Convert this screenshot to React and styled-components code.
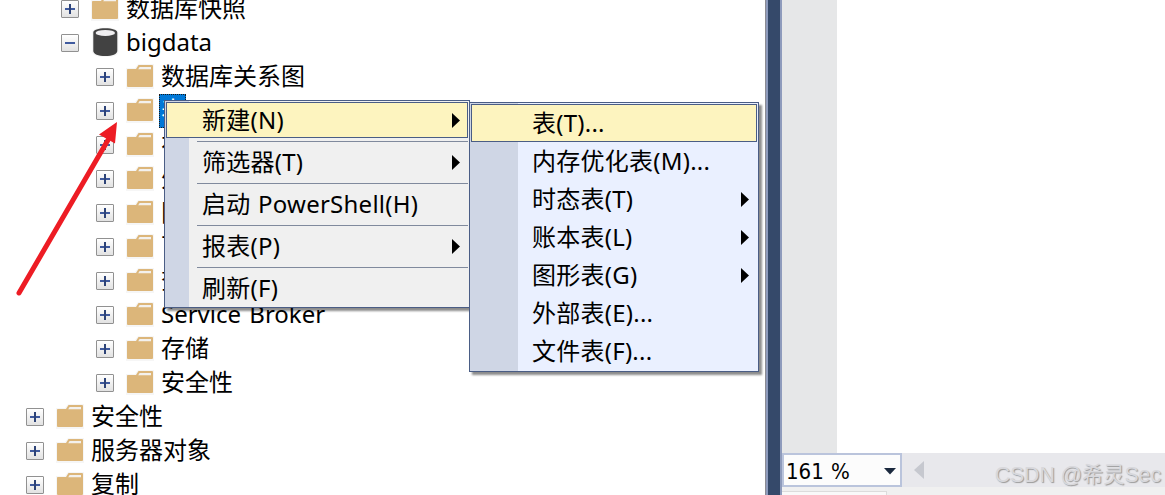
import React from 'react'
import styled, {createGlobalStyle} from 'styled-components';

const tree = [
    {label: '数据库快照', level: 1},
    {label: 'bigdata', level: 1, open: true, database: true},
    {label: '数据库关系图', level: 2},
    {label: '表', level: 2, selected: true},
    {label: '视图', level: 2},
    {label: '外部资源', level: 2},
    {label: '同义词', level: 2},
    {label: '可编程性', level: 2},
    {label: '查询存储', level: 2},
    {label: 'Service Broker', level: 2},
    {label: '存储', level: 2},
    {label: '安全性', level: 2},
    {label: '安全性', level: 0},
    {label: '服务器对象', level: 0},
    {label: '复制', level: 0},
];

const menu = [
    {label: '新建(N)', arrow: true, active: true},
    {label: '筛选器(T)', arrow: true},
    {label: '启动 PowerShell(H)'},
    {label: '报表(P)', arrow: true},
    {label: '刷新(F)'},
];

const submenu = [
    {label: '表(T)...', active: true},
    {label: '内存优化表(M)...'},
    {label: '时态表(T)', arrow: true},
    {label: '账本表(L)', arrow: true},
    {label: '图形表(G)', arrow: true},
    {label: '外部表(E)...'},
    {label: '文件表(F)...'},
];

function Toggle({open}) {
    return (
        <ToggleBox>
            <svg width="10" height="10" viewBox="0 0 10 10" shapeRendering="crispEdges">
                <path d="M0 4h10v2H0z" fill="#3f5a9e"/>
                {!open && <path d="M4 0h2v10H4z" fill="#2d4377"/>}
            </svg>
        </ToggleBox>
    )
}

function Folder() {
    return (
        <svg width="30" height="28" viewBox="0 0 30 28">
            <path d="M1 5h9l3-4h16v25H1z" fill="#f6f6f6"/>
            <path d="M2 6.5Q2 6 3 6h8l2.5-4H27q1 0 1 1v20q0 1-1 1H3q-1 0-1-1z" fill="#dcb67a"/>
            <path d="M14.6 4H26v2.2H13.2z" fill="#f3f1ee"/>
        </svg>
    )
}

function Database() {
    return (
        <svg width="30" height="32" viewBox="0 0 30 32">
            <path d="M2 6Q2 .5 15 .5T28.500 6v19q0 5-13 5T2 25z" fill="#f6f6f6"/>
            <path d="M3.300 5.500c0-2.500 5-4.200 12-4.200s12 1.700 12 4.200v18.500c0 3-5 5-12 5s-12-2-12-5z" fill="#424242"/>
            <ellipse cx="15.300" cy="5.900" rx="9.700" ry="3" fill="#f0eff1"/>
        </svg>
    )
}

function Arrow() {
    return (
        <svg width="8" height="15" viewBox="0 0 8 15">
            <path d="M0 0l8 7.500L0 15z" fill="#000"/>
        </svg>
    )
}

export default function App() {
    return (
        <Page>
            <GlobalStyle/>
            <Explorer>
                {tree.map((node, i) => (
                    <TreeRow key={i} $level={node.level}>
                        <Toggle open={node.open}/>
                        <IconSlot>{node.database ? <Database/> : <Folder/>}</IconSlot>
                        <Label $selected={node.selected}>{node.label}</Label>
                    </TreeRow>
                ))}
            </Explorer>
            <Splitter/>
            <Editor>
                <Code><Gutter/></Code>
                <ScrollRow>
                    <Zoom>
                        <span>161 %</span>
                        <svg width="12" height="7" viewBox="0 0 12 7"><path d="M0 0h12L6 6.500z" fill="#1b293e"/></svg>
                    </Zoom>
                    <svg width="10" height="18" viewBox="0 0 10 18"><path d="M10 0v18L0 9z" fill="#c6c8cf"/></svg>
                    <Watermark>CSDN @希灵Sec</Watermark>
                </ScrollRow>
                <BottomTabs><Tab/></BottomTabs>
            </Editor>
            <ContextMenu>
                {menu.map((item) => (
                    <MenuItem key={item.label} $active={item.active}>
                        <Caption>{item.label}</Caption>
                        {item.arrow && <Arrow/>}
                    </MenuItem>
                ))}
            </ContextMenu>
            <SubMenu>
                {submenu.map((item) => (
                    <SubItem key={item.label} $active={item.active}>
                        <Caption>{item.label}</Caption>
                        {item.arrow && <Arrow/>}
                    </SubItem>
                ))}
            </SubMenu>
            <Pointer width="130" height="310" viewBox="0 0 130 310">
                <path d="M19 293L108 140" stroke="#ed1c24" strokeWidth="5" strokeLinecap="round"/>
                <path d="M117 122L115 143.500 108 139.500 99 134.500z" fill="#ed1c24"/>
            </Pointer>
        </Page>
    )
}

const GlobalStyle = createGlobalStyle`
    body {
        margin: 0;
        overflow: hidden;
    }
    * {
        box-sizing: border-box;
    }
    svg {
        display: block;
        flex: none;
    }
`

const Page = styled.div`
    position: relative;
    display: flex;
    width: 1165px;
    height: 495px;
    overflow: hidden;
    background: #fff;
    color: #000;
    font-family: "Noto Sans", "Noto Sans CJK SC", sans-serif;
    font-size: 24px;
    white-space: nowrap;
`

const Explorer = styled.div`
    width: 765px;
    margin-top: -8px;
`

const TreeRow = styled.div`
    display: flex;
    align-items: center;
    height: 34px;
    padding-left: ${({$level}) => 26 + $level * 35}px;
`

const ToggleBox = styled.div`
    display: flex;
    align-items: center;
    justify-content: center;
    width: 18px;
    height: 18px;
    border: 1px solid #919191;
    border-radius: 1px;
    background: linear-gradient(#fff, #e2e2e2);
`

const IconSlot = styled.div`
    display: flex;
    align-items: center;
    width: 30px;
    height: 32px;
    margin: 0 4px 0 11px;
`

const Label = styled.span`
    height: 34px;
    padding: 0 1px 0 2px;
    line-height: 32px;
    word-spacing: 2px;
    ${({$selected}) => $selected && `
        background: #0078d7;
        color: #fff;
        outline: 1px dotted #1a1a1a;
        outline-offset: -1px;
    `}
`

const Splitter = styled.div`
    width: 16px;
    margin-left: 1px;
    border: solid #8e9bbc;
    border-width: 0 2px;
    background: #35496a;
    box-shadow: -1px 0 #8b8b93;
`

const Editor = styled.div`
    display: flex;
    flex: 1;
    flex-direction: column;
    min-width: 0;
`

const Code = styled.div`
    display: flex;
    height: 453px;
    background: #fff;
`

const Gutter = styled.div`
    width: 55px;
    background: #e6e7e8;
`

const ScrollRow = styled.div`
    display: flex;
    align-items: center;
    height: 34px;
    background: #e8e8ec;
`

const Zoom = styled.div`
    display: flex;
    align-items: center;
    justify-content: space-between;
    width: 120px;
    height: 34px;
    margin-right: 12px;
    padding: 2px 4px 0 2px;
    border: 2px solid #bac4dc;
    background: #fcfcfc;
    font-family: "DejaVu Sans Condensed", "DejaVu Sans", sans-serif;
    font-stretch: condensed;
    font-size: 22px;
    word-spacing: 1px;
`

const Watermark = styled.span`
    margin: 4px 4px 0 auto;
    color: #d8d8dc;
    font-family: "Liberation Sans", "Noto Sans CJK SC", sans-serif;
    font-size: 21.2px;
    text-shadow: 1px 1px 1px #999;
`

const BottomTabs = styled.div`
    height: 8px;
    padding-top: 4px;
    background: #f0f0f0;
`

const Tab = styled.div`
    width: 105px;
    height: 4px;
    border: solid #dcdcdc;
    border-width: 1px 1px 0 0;
    background: #f9f9f9;
`

const Popup = styled.div`
    position: absolute;
    display: flex;
    flex-direction: column;
    padding: 1px;
    border: 1px solid #4a5d85;
    box-shadow: 3px 3px 2px rgba(0, 0, 0, .45);
`

const ContextMenu = styled(Popup)`
    top: 100px;
    left: 164px;
    width: 306px;
    height: 208px;
    background: linear-gradient(90deg, #cfd6e5 24px, #f0f0f0 24px);
`

const SubMenu = styled(Popup)`
    top: 102px;
    left: 469px;
    width: 290px;
    height: 270px;
    background: linear-gradient(90deg, #cfd6e5 48px, #eaf0ff 48px);
`

const Item = styled.div`
    display: flex;
    align-items: center;
    justify-content: space-between;
    border: 1px solid ${({$active}) => $active ? '#4a5d85' : 'transparent'};
    background: ${({$active}) => $active ? '#fdf4bf' : 'transparent'};
`

const MenuItem = styled(Item)`
    position: relative;
    height: 36px;
    padding: 0 7px 0 35px;
    & + & {
        margin-top: 6px;
    }
    & + &::before {
        content: '';
        position: absolute;
        top: -4px;
        right: -1px;
        left: 30px;
        height: 1px;
        background: #808a9d;
    }
`

const SubItem = styled(Item)`
    height: 38px;
    padding: 0 7px 0 60px;
`

const Caption = styled.span`
    line-height: 32px;
    letter-spacing: .25px;
    word-spacing: 1px;
`

const Pointer = styled.svg`
    position: absolute;
    top: 0;
    left: 0;
`
